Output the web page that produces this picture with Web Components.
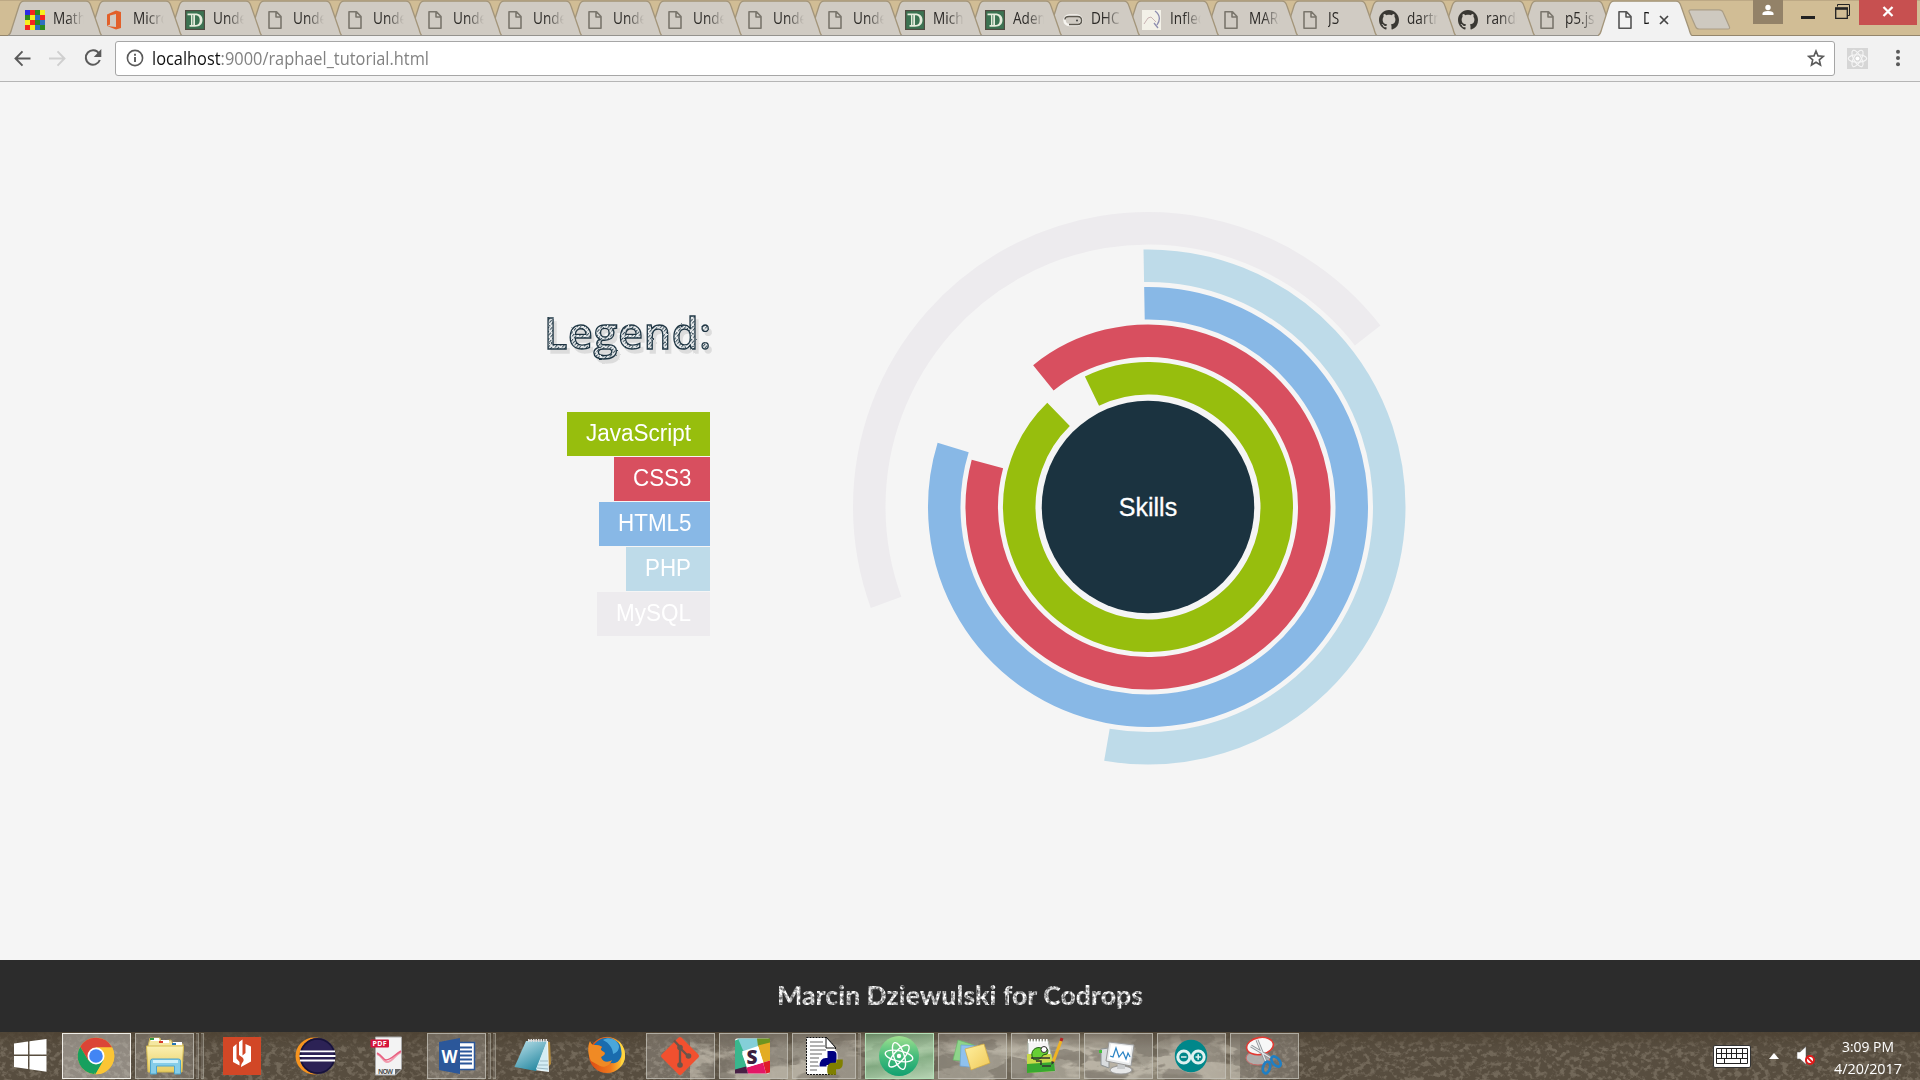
<!DOCTYPE html>
<html lang="en">
<head>
<meta charset="utf-8">
<title>Skills diagram</title>
<style>
html,body{margin:0;width:1920px;height:1080px;overflow:hidden;background:#f5f5f5}
body{font-family:"Open Sans","Noto Sans",sans-serif}
</style>
</head>
<body>
<desktop-screen></desktop-screen>
<script>
const define = (name, html, setup) => customElements.define(name, class extends HTMLElement {
  connectedCallback() {
    if (this.shadowRoot) return;
    const root = this.attachShadow({ mode: 'open' });
    root.innerHTML = typeof html === 'function' ? html(this) : html;
    if (setup) setup(this, root);
  }
});

/* One line of text condensed or stretched to a given width */
define('fit-text', `<style>:host{display:block;white-space:nowrap}span{display:inline-block;transform-origin:0 50%}</style><span><slot></slot></span>`,
  (el, root) => {
    const s = root.querySelector('span');
    const w = +el.getAttribute('w');
    s.style.transform = `scaleX(${w / s.getBoundingClientRect().width})`;
    el.style.width = w + 'px';
  });

const D_ICON = `<rect width="20" height="20" fill="#4f4a40"/><rect x="1.2" y="1.2" width="17.6" height="17.6" fill="#3c7352"/><path fill="#e6ecdc" fill-rule="evenodd" d="M2.500 3.500H10c5 0 7.500 2.500 7.500 6.500s-2.500 6.700-7.500 6.700H4.500V15H6V5.200H2.500zM10 5.200V15c3.500 0 4.700-2 4.700-5s-1.200-4.800-4.700-4.800z"/><path stroke="#3c7352" stroke-width=".800" d="M7.800 5v10"/>`;
const GIT_CAT = `<path fill="#3a3833" transform="scale(1.25)" d="M8 0C3.580 0 0 3.580 0 8c0 3.540 2.290 6.530 5.470 7.590.4.070.550-.170.550-.380 0-.190-.010-.820-.010-1.490-2.010.370-2.530-.490-2.690-.940-.090-.230-.480-.940-.820-1.130-.280-.150-.680-.520-.010-.530.630-.010 1.080.580 1.230.820.720 1.210 1.870.870 2.330.660.070-.520.280-.870.510-1.070-1.780-.2-3.640-.890-3.640-3.950 0-.870.310-1.590.820-2.150-.080-.2-.360-1.020.080-2.120 0 0 .670-.210 2.200.820.640-.180 1.320-.270 2-.270s1.360.090 2 .270c1.530-1.040 2.200-.820 2.200-.820.440 1.100.160 1.920.080 2.120.510.560.820 1.270.820 2.150 0 3.070-1.870 3.750-3.650 3.950.290.250.540.730.540 1.480 0 1.070-.010 1.930-.010 2.200 0 .210.150.460.550.380A8.010 8.010 0 0 0 16 8c0-4.420-3.580-8-8-8z"/>`;
const favicons = {
  math: (() => {
    const map = {0:'#2a2ae6',1:'#f5251f',2:'#2d8a1c',3:'#f7f01e',4:'#2f6fc0'};
    return ['0123','2341','3124','1342'].map((r,y)=>[...r].map((v,x)=>`<rect x="${x*5}" y="${y*5}" width="5" height="5" fill="${map[v]}"/>`).join('')).join(''); })(),
  office: `<path fill="#e2602a" d="M2 4.500 11 .500l5 1.500v16l-5 1.500-9-3.500 9 1V4L5 5.500v9L2 16z"/>`,
  d: D_ICON,
  doc: `<path fill="none" stroke="currentColor" stroke-width="1.600" stroke-linejoin="round" d="M4 1.800h7.500L16 6.500v11.700H4zM11 2v5h5"/>`,
  dhc: `<rect x="1.500" y="5.500" width="17" height="9.500" rx="4.700" fill="none" stroke="#f7f5f0" stroke-width="2.500"/><path fill="none" stroke="#5c584f" stroke-width="1.500" d="M2 9.500C2 7 4 6.500 6 6.500h8.500c3 0 4 2 4 4s-1 4-4 4H6"/><circle cx="14" cy="10.500" r="1" fill="#444"/>`,
  infle: `<rect width="19" height="20" fill="#f3f1e8"/><path fill="none" stroke="#c9b3b3" stroke-width="1" d="M2 14 6 8l3-1 5 5"/><path fill="none" stroke="#8d8daf" stroke-width="1.300" d="M13 1c4 3 6 8 2 14M12 13l4 5"/>`,
  git: GIT_CAT
};

define('browser-tab', el => `
<style>
:host{display:block;width:94px;height:36px;flex:none;margin-right:var(--lap,-14px);color:#7a766d}
:host([active]){color:#555}
.box{display:grid;width:94px;height:36px}
.box>*{grid-area:1/1}
.row{display:flex;align-items:center;padding:3px 0 0 17px;gap:8px}
.row svg{flex:none}
.label{width:31px;overflow:hidden;font-size:16px;line-height:21px;height:24px;color:#2c2a27;white-space:nowrap;-webkit-mask-image:linear-gradient(90deg,#000 45%,transparent 100%)}
.label span{display:inline-block;transform:scaleX(.85);transform-origin:0 50%}
:host([active]) .label{width:6px;color:#111;-webkit-mask-image:none;margin-right:2px}
:host([short]) .label{-webkit-mask-image:none}
</style>
<div class="box">
<svg width="94" height="36" viewBox="0 0 94 36">
<path fill="${el.hasAttribute('active') ? '#f2f2f2' : '#d0cbc3'}" d="M0 36C3 34 3 31 4 28L11 6Q12.500 1.200 16 1.200H78Q81.500 1.200 83 6L91 29Q92.500 35 94 36z"/>
<path fill="none" stroke="#a3957a" stroke-width="1.300" d="M0 35.500C3 34 3 31 4 28L11 6Q12.500 1.200 16 1.200H78Q81.500 1.200 83 6L91 29Q92.500 35 94 35.500"/>
${el.hasAttribute('active') ? '' : '<path stroke="#94928d" d="M0 35.500H94"/>'}
</svg>
<div class="row"><svg width="20" height="20" viewBox="0 0 20 20">${favicons[el.getAttribute('icon')]}</svg>
<div class="label"><span><slot></slot></span></div>
${el.hasAttribute('active') ? '<svg width="10" height="10" viewBox="0 0 10 10"><path stroke="#444" stroke-width="1.700" d="m1 1 8 8M9 1 1 9"/></svg>' : ''}
</div></div>`);

define('window-controls', `
<style>
:host{display:flex;align-items:flex-start;height:35px;margin-left:auto}
.p{width:30px;height:24px;background:#938268;margin-right:18px}
.m{width:14px;height:2.500px;background:#222;margin:16px 20px 0 0}
.r{margin:4px 9px 0 0;width:15px;height:15px}
.x{width:58px;height:25px;background:#c75050;margin-right:3px;display:grid;place-items:center}
svg{display:block}
.x svg{margin-top:-2px}
</style>
<div class="p"><svg width="30" height="24"><circle cx="15" cy="7.500" r="2.700" fill="#fff"/><path fill="#fff" d="M9.500 15v-1.500q0-2.500 5.500-2.500t5.500 2.500v1.500z"/></svg></div>
<div class="m"></div>
<div class="r"><svg width="15" height="15"><path fill="none" stroke="#222" d="M2.500 2.500V.500h12v11h-2"/><path fill="none" stroke="#222" stroke-width="1.300" d="M.700 4.500h11.600v9.800H.700z"/><path stroke="#222" stroke-width="2.500" d="M0 4.500h13"/></svg></div>
<div class="x"><svg width="12" height="11" viewBox="0 0 12 11"><path stroke="#fff" stroke-width="2.300" d="m1.500 1 9 9M10.500 1l-9 9"/></svg></div>`);

define('tab-strip', `
<style>
:host{display:flex;height:36px;background:#d1bd95;box-sizing:border-box;padding-left:7.500px;box-shadow:inset 0 -1px #94866c, inset 0 1px #bda985}
.new{flex:none;margin:9px 0 0 11px}
</style>
${[['math','Math'],['office','Micro'],['d','Under'],...Array(8).fill(['doc','Under']),['d','Micha'],['d','Adem'],['dhc','DHC'],['infle','Inflec'],['doc','MARC'],['doc','JS'],['git','dartm'],['git','rando'],['doc','p5.js'],['doc','D']]
  .map(([i,t],k)=>`<browser-tab icon="${i}" style="z-index:${k===20?50:30-k};--lap:${k>=12?-15.15:-14}px"${k===20?' active':''}${t==='JS'?' short':''}>${t}</browser-tab>`).join('')}
<svg class="new" width="43" height="21" viewBox="0 0 43 21"><path fill="#cec9c0" stroke="#ab9e86" stroke-width="1.200" d="M3 .800H31q3 0 4 2.500L41.500 18q.5 2-1.500 2H11q-2.500 0-3.500-2.500L1 2.500Q.800.800 3 .800z"/></svg>
<window-controls></window-controls>`);

define('tool-bar', `
<style>
:host{display:flex;align-items:center;height:46px;box-sizing:border-box;background:#f2f2f2;border-bottom:1px solid #b5b5b5;padding:0 0 1px 14px}
svg{flex:none;display:block}
.fwd{margin:0 18px 0 18px}
.omni{display:flex;align-items:center;box-sizing:border-box;height:35px;width:1720px;margin-left:13px;border:1px solid #a6a6a6;border-radius:3px;background:#fff;padding:0 9px 0 10px}
fit-text{font-size:17.500px;line-height:30px;color:#828282;margin-left:7.500px}
b{font-weight:400;color:#111}
.star{margin-left:auto}
.ext{margin:0 27px 0 12px}
</style>
<svg width="17" height="17" viewBox="0 0 17 17"><path fill="none" stroke="#5a5a5a" stroke-width="1.900" d="M16.500 8.500H1.800M8.500 1.300 1.500 8.500l7 7.200"/></svg>
<svg class="fwd" width="17" height="17" viewBox="0 0 17 17"><path fill="none" stroke="#cfcfcf" stroke-width="1.900" d="M0 8.500h15M8.500 1.300l7 7.200-7 7.200"/></svg>
<svg width="18" height="18" viewBox="0 0 18 18"><path fill="none" stroke="#5a5a5a" stroke-width="2" d="M15 4.500A7.200 7.200 0 1 0 15.800 11"/><path fill="#5a5a5a" d="M17.300 0v8H9.800z"/></svg>
<div class="omni">
<svg width="18" height="18" viewBox="0 0 18 18"><circle cx="9" cy="9" r="7.600" fill="none" stroke="#5a5a5a" stroke-width="1.600"/><path stroke="#5a5a5a" stroke-width="1.900" d="M9 8v5M9 4.800v2"/></svg>
<fit-text w="277"><b>localhost</b>:9000/raphael_tutorial.html</fit-text>
<svg class="star" width="18" height="18" viewBox="0 0 18 18"><path fill="none" stroke="#5a5a5a" stroke-width="1.600" d="m9 2 2 4.900 5.300.4-4 3.500 1.200 5.200L9 13.200 4.500 16l1.200-5.200-4-3.500L7 6.900z"/></svg>
</div>
<svg class="ext" width="21" height="21" viewBox="0 0 21 21"><rect width="21" height="21" fill="#d6d6d6"/><g fill="none" stroke="#f6f6f6" stroke-width="1.100"><ellipse cx="10.500" cy="10.500" rx="9.200" ry="3.700"/><ellipse cx="10.500" cy="10.500" rx="9.200" ry="3.700" transform="rotate(60 10.500 10.500)"/><ellipse cx="10.500" cy="10.500" rx="9.200" ry="3.700" transform="rotate(120 10.500 10.500)"/></g><circle cx="10.500" cy="10.500" r="2" fill="#fff"/></svg>
<svg width="6" height="18"><g fill="#5a5a5a"><circle cx="3" cy="2.700" r="2"/><circle cx="3" cy="9" r="2"/><circle cx="3" cy="15.300" r="2"/></g></svg>`);

define('sketch-heading', `
<style>:host{display:block}svg{display:block;overflow:visible;filter:drop-shadow(3px 4px 0 #dcdcdc)}
text{font:600 43px "Open Sans",sans-serif}</style>
<svg width="163" height="60"><defs><pattern id="h" width="2.600" height="5" patternUnits="userSpaceOnUse" patternTransform="rotate(42)"><rect width="2.600" height="5" fill="#f0f2f3"/><rect width="1.100" height="3.600" fill="#3d525e"/></pattern>
<filter id="rough" x="-5%" y="-10%" width="110%" height="120%"><feTurbulence type="fractalNoise" baseFrequency=".25" numOctaves="2" seed="4"/><feDisplacementMap in="SourceGraphic" scale="1.800" xChannelSelector="R" yChannelSelector="G"/></filter></defs>
<text x="-3" y="40" textLength="167" lengthAdjust="spacing" fill="url(#h)" stroke="#1b3341" stroke-width="1.300" filter="url(#rough)">Legend:</text></svg>`);

define('legend-item', el => `
<style>:host{display:block;box-sizing:border-box;height:44px;padding:0 19px;background:var(--c);color:#fff;font:23.500px/42px "Liberation Sans",Arial,sans-serif;margin-bottom:1px}</style><fit-text w="${el.getAttribute('w')}"><slot></slot></fit-text>`);

define('skills-legend', `
<style>:host{display:flex;flex-direction:column;align-items:flex-end;width:163px}
sketch-heading{margin-bottom:43px}</style>
<sketch-heading></sketch-heading>
<legend-item w="105" style="--c:#97be0d">JavaScript</legend-item>
<legend-item w="58.5" style="--c:#d84f5f">CSS3</legend-item>
<legend-item w="73.5" style="--c:#88b8e6">HTML5</legend-item>
<legend-item w="46" style="--c:#bedbe9">PHP</legend-item>
<legend-item w="75" style="--c:#edebee">MySQL</legend-item>`);

const arc = (r, a, b, c) => {
  const p = d => { const t = d * Math.PI / 180; return `${300 + r * Math.sin(t)} ${300 - r * Math.cos(t)}`; };
  return `<path fill="none" stroke="${c}" stroke-width="32.500" d="M${p(a)}A${r} ${r} 0 ${b - a > 180 ? 1 : 0} 1 ${p(b)}"/>`;
};
define('skills-chart', `
<style>:host{display:block}svg{display:block}text{font:25px "Liberation Sans",Arial,sans-serif}</style>
<svg width="600" height="600">
${arc(128.75,-25.8,316,'#97be0d')}${arc(166.25,-39,285,'#d84f5f')}${arc(203.75,-1,287,'#88b8e6')}${arc(241.25,-1,189.8,'#bedbe9')}${arc(278.75,-110,52,'#edebee')}
<circle cx="300" cy="300" r="106.250" fill="#1b3340"/>
<text x="300" y="309" text-anchor="middle" fill="#fff" stroke="#fff" stroke-width=".300">Skills</text></svg>`);

define('page-footer', `
<style>:host{display:flex;justify-content:center;align-items:center;height:72px;background:#2c2c2c}
svg{display:block;overflow:visible}text{font:900 27px Lato,sans-serif}</style>
<svg width="372" height="44"><defs><filter id="chalk" x="-2%" y="-10%" width="104%" height="120%" color-interpolation-filters="sRGB"><feTurbulence type="fractalNoise" baseFrequency=".35" numOctaves="2" seed="3" result="n"/><feColorMatrix in="n" values="1.600 0 0 0 -.040  1.600 0 0 0 -.040  1.600 0 0 0 -.040  0 0 0 0 1" result="g"/><feComposite in="g" in2="SourceGraphic" operator="in" result="t"/><feDisplacementMap in="t" in2="n" scale="1.500" xChannelSelector="R" yChannelSelector="G"/></filter></defs>
<text x="3" y="30.500" textLength="366" lengthAdjust="spacingAndGlyphs" fill="#ddd" filter="url(#chalk)">Marcin Dziewulski for Codrops</text></svg>`);

define('web-page', `
<style>:host{display:flex;flex-direction:column;height:950px;background:#f5f5f5}
main{flex:1;display:flex;align-items:flex-start}
skills-legend{margin:227px 0 0 547px}
skills-chart{margin:125px 0 0 138px}</style>
<main><skills-legend></skills-legend><skills-chart></skills-chart></main>
<page-footer></page-footer>`);

/* Task bar icons, each drawn on the 69x46 face of its button */
const apps = {
chrome:`<circle cx="34" cy="23" r="18.300" fill="#fbc535"/><path fill="#db4437" d="M18.200 13.700A18.300 18.300 0 0 1 50.200 14.500L34 14.500 26 27z"/><path fill="#17a05e" d="M18.200 13.700 26.400 27.500 34 32 32.500 41.300A18.300 18.300 0 0 1 18.200 13.700z"/><path fill="#17a05e" d="M26 27.500 41.500 27.500 33.500 41.300z"/><path fill="#fbc535" d="M34 14.500h16.200A18.300 18.300 0 0 1 33.500 41.300L41.500 27.500z"/><circle cx="34" cy="23" r="8.500" fill="#fff"/><circle cx="34" cy="23" r="6.800" fill="#4285f4"/>`,
explorer:`<path fill="#f4e7a0" stroke="#cdb65e" d="M14 9l1-4h10l1 3 10-1 2 4h10v8H12z"/><path fill="#fff" d="M16 5h8v3h-8zM26 7h8v3h-8zM38 9h9v3h-9z"/><path fill="#2f9b45" d="M15 5h4v2h-4z"/><path fill="#d83b2c" d="M24 8h4v2h-4z"/><path fill="#2675b5" d="M37 10h4v2h-4z"/><path fill="url(#fold)" stroke="#d6bb52" d="M11.500 13h37l-1.500 26H13z"/><path fill="#86cde9" stroke="#4fa5cc" d="M15.500 41V28q0-2 2-2h26q2 0 2 2v13h-6v-8h-18v8z"/><path fill="#d0f0fa" d="M18 27h25v3H18z"/>`,
annot:`<rect x="15" y="4" width="38" height="38" fill="#d24726"/><path fill="#fff" d="M25 14l3.500-3v14.500l3 3.500v3.500L25 29zM31 9l3.500-2.500v16l3-2.500V11l5.500 2.500v15L33 34c0-2 .5-3 1.500-4.500 1.500-2 1.500-3 0-5L31 22z"/>`,
eclipse:`<circle cx="33" cy="23" r="18.500" fill="#f7941e"/><circle cx="36.500" cy="23" r="18" fill="#2c2255"/><circle cx="36.500" cy="23" r="17" fill="none" stroke="#17133a" stroke-width="1.500"/><path stroke="#fff" stroke-width="1.800" d="M19 18.300h35M18.500 23h36M19 27.500h35"/>`,
pdf:`<path fill="#f3f3f3" stroke="#aaa" d="M21.500 4h26v32l-6 6h-20z"/><path fill="none" stroke="#f29cae" stroke-width="2" d="M23 21c5 1 6 8 10 8 6 0 7-7 14-10"/><path fill="none" stroke="#e86080" stroke-width="1.500" d="M23 20c6 3 6 7 9 7 5 0 8-5 15-9"/><path fill="#666" d="M41 42v-6h6z"/><rect x="16.500" y="6.500" width="18.500" height="8" rx="1" fill="#d5143c"/><text x="18.500" y="13" font-size="7" font-weight="700" textLength="14" fill="#fff">PDF</text><text x="24" y="41.200" font-size="6.500" font-weight="700" textLength="15" fill="#555">NOW</text>`,
word:`<rect x="30" y="9.500" width="17.500" height="27" fill="#fff" stroke="#2b579a" stroke-width="1.500"/><path stroke="#2b579a" stroke-width="2" d="M33 14.500h12M33 18.500h12M33 22.500h12M33 26.500h12M33 30.500h12"/><path fill="#2b579a" d="m12 9 21-4v36l-21-4z"/><text x="14.500" y="29.500" font-size="17" font-weight="700" textLength="16" lengthAdjust="spacingAndGlyphs" fill="#fff">W</text>`,
notepad:`<path fill="#b58b3c" d="M47 9h3l1 22-3 3z"/><path fill="#eef6f9" d="M28 7l20 1 1 31-15-2z"/><path fill="url(#note)" d="M26 8h21L36 38 14.500 34z"/><path fill="#d4edf4" d="M47 8l1 30-12-2z"/><path stroke="#ddd" stroke-width="3" stroke-dasharray="1.500 1" d="M28 7.500h20"/><path stroke="#9dbac4" d="M40 28h8M38 32h10M37 35l11 1"/>`,
firefox:`<circle cx="34" cy="22" r="18" fill="url(#fox)"/><path fill="#1a6cae" d="M21 12c4-6 12-9 19-6 8 4 11 11 8 18-2 5-6 7-9 6-6 1-11-2-11-6 3-2 5-3 3-5-3-1-4-3-2-5-3-2-6-2-8-2z"/><path fill="#56b7e6" d="M30 7c6-4 14-1 16 6 0 5-3 7-6 8 0-6-4-11-10-14z" opacity=".8"/><path fill="#f08a24" d="M17 8c1 2 2 4 4 4 3 0 5 0 8 2-2 2-1 4 2 5 2 2-1 4-3 5 1 5 7 6 11 3-2 6-8 8-12 6l-9-5c-3-6-4-14-1-20z"/><path fill="#ffd540" d="M45 7c8 8 10 20 2 27 3-9 2-19-2-27z"/>`,
git:`<rect x="20" y="9" width="28" height="28" rx="2" transform="rotate(45 34 23)" fill="#f1502f"/><g stroke="#6a554b" stroke-width="2.300" fill="none"><path d="M28 7.500l6 6.500v18M34 15l8 8"/></g><g fill="#6a554b"><circle cx="34" cy="14.500" r="2.800"/><circle cx="34" cy="32" r="2.800"/><circle cx="42.500" cy="23" r="2.800"/></g>`,
slack:`<g transform="translate(16 5.500)"><rect width="35" height="35" rx="2" fill="#fff"/><path fill="#39b68d" d="M0 2 5 0l5 14-3 1 5 14L0 32z"/><path fill="#84cfd8" d="M3 0h20l2 8L9 14z"/><path fill="#6d9420" d="M22 0h13v5L23 8z"/><path fill="#e3ac24" d="M23 7l12-3v18l-7 2z"/><path fill="#df1c28" d="M28 24l7-2v12l-4 1z"/><path fill="#e31666" d="M11 29l17-5 3 11H13z"/><path fill="#472044" d="M0 31l11-3 2 7H0z"/><path fill="#fff" d="M7 13l16-5.500 5.500 16.500L12 29z"/><text x="11.500" y="25" font-size="19" font-weight="800" fill="#3b1f3f">S</text></g>`,
python:`<path fill="#fff" stroke="#111" stroke-dasharray="2 1" d="M14.500 4.500h20l9 10v27h-29z"/><path stroke="#999" stroke-width="1.500" d="M18 9h13M18 13h15M18 17h16M18 21h12M18 25h9M18 29h8M18 33h9M18 37h7"/><path fill="#fff" stroke="#111" d="M34 4v11h10z"/><path fill="none" stroke="#fff" stroke-width="9" stroke-linejoin="round" d="M36 21h5v7q0 1-2 1h-6q-2 0-2 4"/><path fill="none" stroke="#000080" stroke-width="7" stroke-linejoin="round" d="M35.500 21.500h5.500v5.500q0 1.500-2 1.500h-5q-3 0-3 5"/><path fill="none" stroke="#808000" stroke-width="6.500" stroke-linejoin="round" d="M47.500 26.500v4q0 2.500-2.500 2.500h-4q-2.500 0-2.500 2.500v3h5.500"/>`,
atom:`<circle cx="34" cy="23" r="20" fill="url(#atomg)"/><g fill="none" stroke="#fff" stroke-width="1.400"><ellipse cx="34" cy="23" rx="14" ry="5.200" transform="rotate(12 34 23)"/><ellipse cx="34" cy="23" rx="14" ry="5.200" transform="rotate(72 34 23)"/><ellipse cx="34" cy="23" rx="14" ry="5.200" transform="rotate(132 34 23)"/></g><circle cx="34" cy="23" r="2.200" fill="#fff"/>`,
sticky:`<path fill="#8ed48a" stroke="#6ab868" stroke-width=".700" d="m20 7 16 5-6 17-15-2z"/><path fill="#8fc1ee" stroke="#6ca0d2" stroke-width=".700" d="m23 12 17 1v22l-18-2z"/><path fill="url(#stick)" stroke="#d3a93d" stroke-width=".700" d="m27 16 19-5 6 19-19 7z"/>`,
npp:`<path fill="#f5f5f5" stroke="#a5b0a5" d="M17 8h20l7 30-27 1z"/><path stroke="#fff" stroke-width="4" stroke-dasharray="1.500 1.500" d="M17 8h20"/><path fill="#c9d94a" d="M16 21h24l4 17-28 2z"/><path fill="#38a830" d="M16 31l27-2 1 9-28 2z"/><path fill="#67cf36" stroke="#1c5c10" d="M22 26c-4-8 3-13 8-11 7-2 8 3 6 6l-4 1c-2 4-6 6-10 4z"/><circle cx="33" cy="16.500" r="3" fill="#fff" stroke="#333"/><path fill="none" stroke="#333" stroke-width="1.500" d="M20 25h19M25 28h5v4M31 33h9"/><path stroke="#efb325" stroke-width="3" d="M50 8 42 29"/><path stroke="#b32424" stroke-width="3" d="m51 5-1 3"/><path fill="#333" d="m40.500 28 3 1-3 3z"/>`,
monitor:`<path fill="#d9dcde" stroke="#8e9293" d="M17 16l8-1v20l-8-3z"/><path fill="#42bd3c" d="M15 17h3v3h-3z"/><ellipse cx="37" cy="37" rx="11" ry="4" fill="#e6e7e8" stroke="#999"/><path fill="#c8cacb" d="m34 29 7 1v6h-8z"/><path fill="#e9ebec" stroke="#999" d="m25 9 25 3-3 21-25-5z"/><path fill="#fff" d="m27 11 20.500 2.500-2.500 16.500-20.500-4z"/><path fill="none" stroke="#2a83c4" stroke-width="1.200" d="m26 23 3 1 3-9 3 9 4-5 3 7 2-6 2 4"/>`,
arduino:`<circle cx="34" cy="23" r="16.200" fill="#00878a"/><g fill="none" stroke="#dff1f0" stroke-width="3"><circle cx="26.800" cy="24" r="6"/><circle cx="41.200" cy="24" r="6"/></g><path stroke="#dff1f0" stroke-width="1.600" d="M24 24h5.500M38.500 24h5.500M41.200 21.300v5.500"/>`,
snip:`<ellipse cx="28" cy="25" rx="12" ry="7" fill="#bbb" opacity=".8" stroke="#d66" stroke-width="1"/><ellipse cx="30" cy="13" rx="13.500" ry="8.500" transform="rotate(-10 30 13)" fill="#f7f7f7" stroke="#e23a33" stroke-width="1.600"/><path stroke="#8f9498" stroke-width="3" d="M27 7l9 22M21 13l20 12"/><path stroke="#e8eaec" stroke-width="1.200" d="M27 7l9 22M21 13l20 12"/><g fill="none" stroke="#1f7fc4" stroke-width="2.600"><ellipse cx="36.500" cy="34.500" rx="3.500" ry="6" transform="rotate(15 36.500 34.500)"/><ellipse cx="46" cy="28.500" rx="3.500" ry="6" transform="rotate(-40 46 28.500)"/></g>`
};
define('task-button', el => `
<style>
:host{display:flex;width:69px;height:46px;flex:none;gap:2px}
.face{box-sizing:border-box;flex:1;min-width:0;border:1px solid transparent}
.edge{box-sizing:border-box;width:3px;border:1px solid #aaa69a99;border-left:0;background:#ffffff20}
svg{display:block;margin:-1px;overflow:visible}
text{font-family:"Open Sans",sans-serif}
:host([open]) .face{border:1px solid #c5c2b8c0;background:#ffffff30}
:host([active]) .face{border:1.500px solid #f0eee8;background:#ffffff58}
:host([green]) .face{border:1.500px solid #b3e0b8;background:linear-gradient(170deg,#6fae7b90,#b5dfb6c0 45%,#86b88ad0 60%,#c7ecc8d0)}
</style>
<div class="face"><svg width="69" height="46" viewBox="0 0 69 46"><defs>
<linearGradient id="fold" x2="0" y2="1"><stop stop-color="#fbf1b2"/><stop offset="1" stop-color="#e8cc62"/></linearGradient>
<linearGradient id="note" x2=".6" y2="1"><stop stop-color="#bfe3ec"/><stop offset="1" stop-color="#2b8ba3"/></linearGradient>
<linearGradient id="fox" x2="1" y2="0"><stop stop-color="#dc4a14"/><stop offset=".6" stop-color="#f07a1d"/><stop offset="1" stop-color="#ffd93b"/></linearGradient>
<linearGradient id="atomg" x2="0" y2="1"><stop stop-color="#9fe08f"/><stop offset=".5" stop-color="#47bd7c"/><stop offset="1" stop-color="#10a070"/></linearGradient>
<linearGradient id="stick" x2="1" y2="1"><stop stop-color="#fff0a0"/><stop offset="1" stop-color="#f0c958"/></linearGradient></defs>${apps[el.getAttribute('app')]}</svg></div>
${'<div class="edge"></div>'.repeat(+el.getAttribute('stack') || 0)}`);

define('system-tray', `
<style>:host{display:flex;align-items:center;margin-left:auto;height:48px;width:207px;color:#fff}
svg{display:block;flex:none}.up{margin:0 18px}.clock{display:flex;flex-direction:column;align-items:center;width:68px;margin-left:19px;font-size:15px;line-height:22px;padding-top:1px}</style>
<svg width="38" height="23" viewBox="0 0 38 23"><rect x=".500" y=".500" width="37" height="22" rx="1.500" fill="#fff" stroke="#333"/><path fill="none" stroke="#222" d="M3.500 3.500h31v15h-31zM3.500 8.500h31M3.500 13.500h31M8.500 3.500v10M13.500 3.500v10M18.500 3.500v10M23.500 3.500v10M29.500 3.500v10M11.500 13.500v5M27.500 13.500v5"/></svg>
<svg class="up" width="10" height="6"><path fill="#fff" d="M0 6 5 0l5 6z"/></svg>
<svg width="18" height="20" viewBox="0 0 18 20"><path fill="#fff" stroke="#555" stroke-width=".500" d="M0 6h3l6-5.500v18L3 13H0z"/><circle cx="13" cy="14" r="4" fill="#fff" stroke="#e01b1b" stroke-width="2"/><path stroke="#e01b1b" stroke-width="2" d="m10 11 6 6"/></svg>
<div class="clock"><fit-text w="52">3:09 PM</fit-text><fit-text w="68">4/20/2017</fit-text></div>`);

define('task-bar', `
<style>
:host{display:grid;height:48px;overflow:hidden;background:#574d3f}
.tex,.row{grid-area:1/1}
.tex{display:block}
.row{display:flex;z-index:1}
.apps{display:flex;gap:4px;padding-top:1px}
.start{margin:7px 15px 0 14px;flex:none}
</style>
<svg class="tex" width="1920" height="48"><defs>
<filter id="grain" x="0" y="0" width="100%" height="100%" color-interpolation-filters="sRGB"><feTurbulence type="fractalNoise" baseFrequency=".17 .2" numOctaves="3" seed="7"/><feColorMatrix values="0 0 0 0 .58  0 0 0 0 .54  0 0 0 0 .48  5 0 0 0 -2.400"/></filter>
<filter id="blot" x="0" y="0" width="100%" height="100%" color-interpolation-filters="sRGB"><feTurbulence type="fractalNoise" baseFrequency=".03 .06" numOctaves="4" seed="12"/><feColorMatrix values="0 0 0 0 .34  0 0 0 0 .31  0 0 0 0 .26  14 0 0 0 -7.200"/></filter>
<filter id="pale" x="0" y="0" width="100%" height="100%" color-interpolation-filters="sRGB"><feTurbulence type="fractalNoise" baseFrequency=".015 .04" numOctaves="4" seed="31"/><feColorMatrix values="0 0 0 0 .74  0 0 0 0 .71  0 0 0 0 .64  12 0 0 0 -6.200"/></filter>
<linearGradient id="lit"><stop offset=".36" stop-color="#8d8676" stop-opacity="0"/><stop offset=".42" stop-color="#857e6f"/><stop offset=".56" stop-color="#958e7d"/><stop offset=".62" stop-color="#8f8878"/><stop offset=".66" stop-color="#8d8676" stop-opacity="0"/></linearGradient>
<linearGradient id="shade" x2="0" y2="1"><stop stop-color="#4d4233" stop-opacity=".9"/><stop offset=".35" stop-color="#4d4233" stop-opacity="0"/></linearGradient></defs>
<rect width="1920" height="48" fill="#574d3f"/><rect width="1920" height="48" filter="url(#grain)" opacity=".45"/><rect width="1920" height="48" fill="url(#lit)" opacity=".85"/>
<rect x="690" width="550" height="48" filter="url(#pale)" opacity=".6"/><rect x="690" width="560" height="48" filter="url(#blot)" opacity=".55"/><rect width="1920" height="48" fill="url(#shade)"/></svg>
<div class="row">
<svg class="start" width="33" height="33" viewBox="0 0 33 33"><path fill="#fff" d="M0 4.500 14 2.500V15.500H0zM15.500 2.300 32.500 0v15.500h-17zM0 17h14v13L0 28zM15.500 17h17v15.700l-17-2.500z"/></svg>
<div class="apps">
<task-button app="chrome" open active></task-button><task-button app="explorer" open stack="2"></task-button><task-button app="annot"></task-button><task-button app="eclipse"></task-button><task-button app="pdf"></task-button><task-button app="word" open stack="2"></task-button><task-button app="notepad"></task-button><task-button app="firefox"></task-button><task-button app="git" open></task-button><task-button app="slack" open></task-button><task-button app="python" open stack="1"></task-button><task-button app="atom" open green></task-button><task-button app="sticky" open></task-button><task-button app="npp" open></task-button><task-button app="monitor" open></task-button><task-button app="arduino" open></task-button><task-button app="snip" open></task-button>
</div><system-tray></system-tray></div>`);

define('desktop-screen', `
<style>:host{display:flex;flex-direction:column;width:1920px;height:1080px}</style>
<tab-strip></tab-strip><tool-bar></tool-bar><web-page></web-page><task-bar></task-bar>`);
</script>
</body>
</html>
